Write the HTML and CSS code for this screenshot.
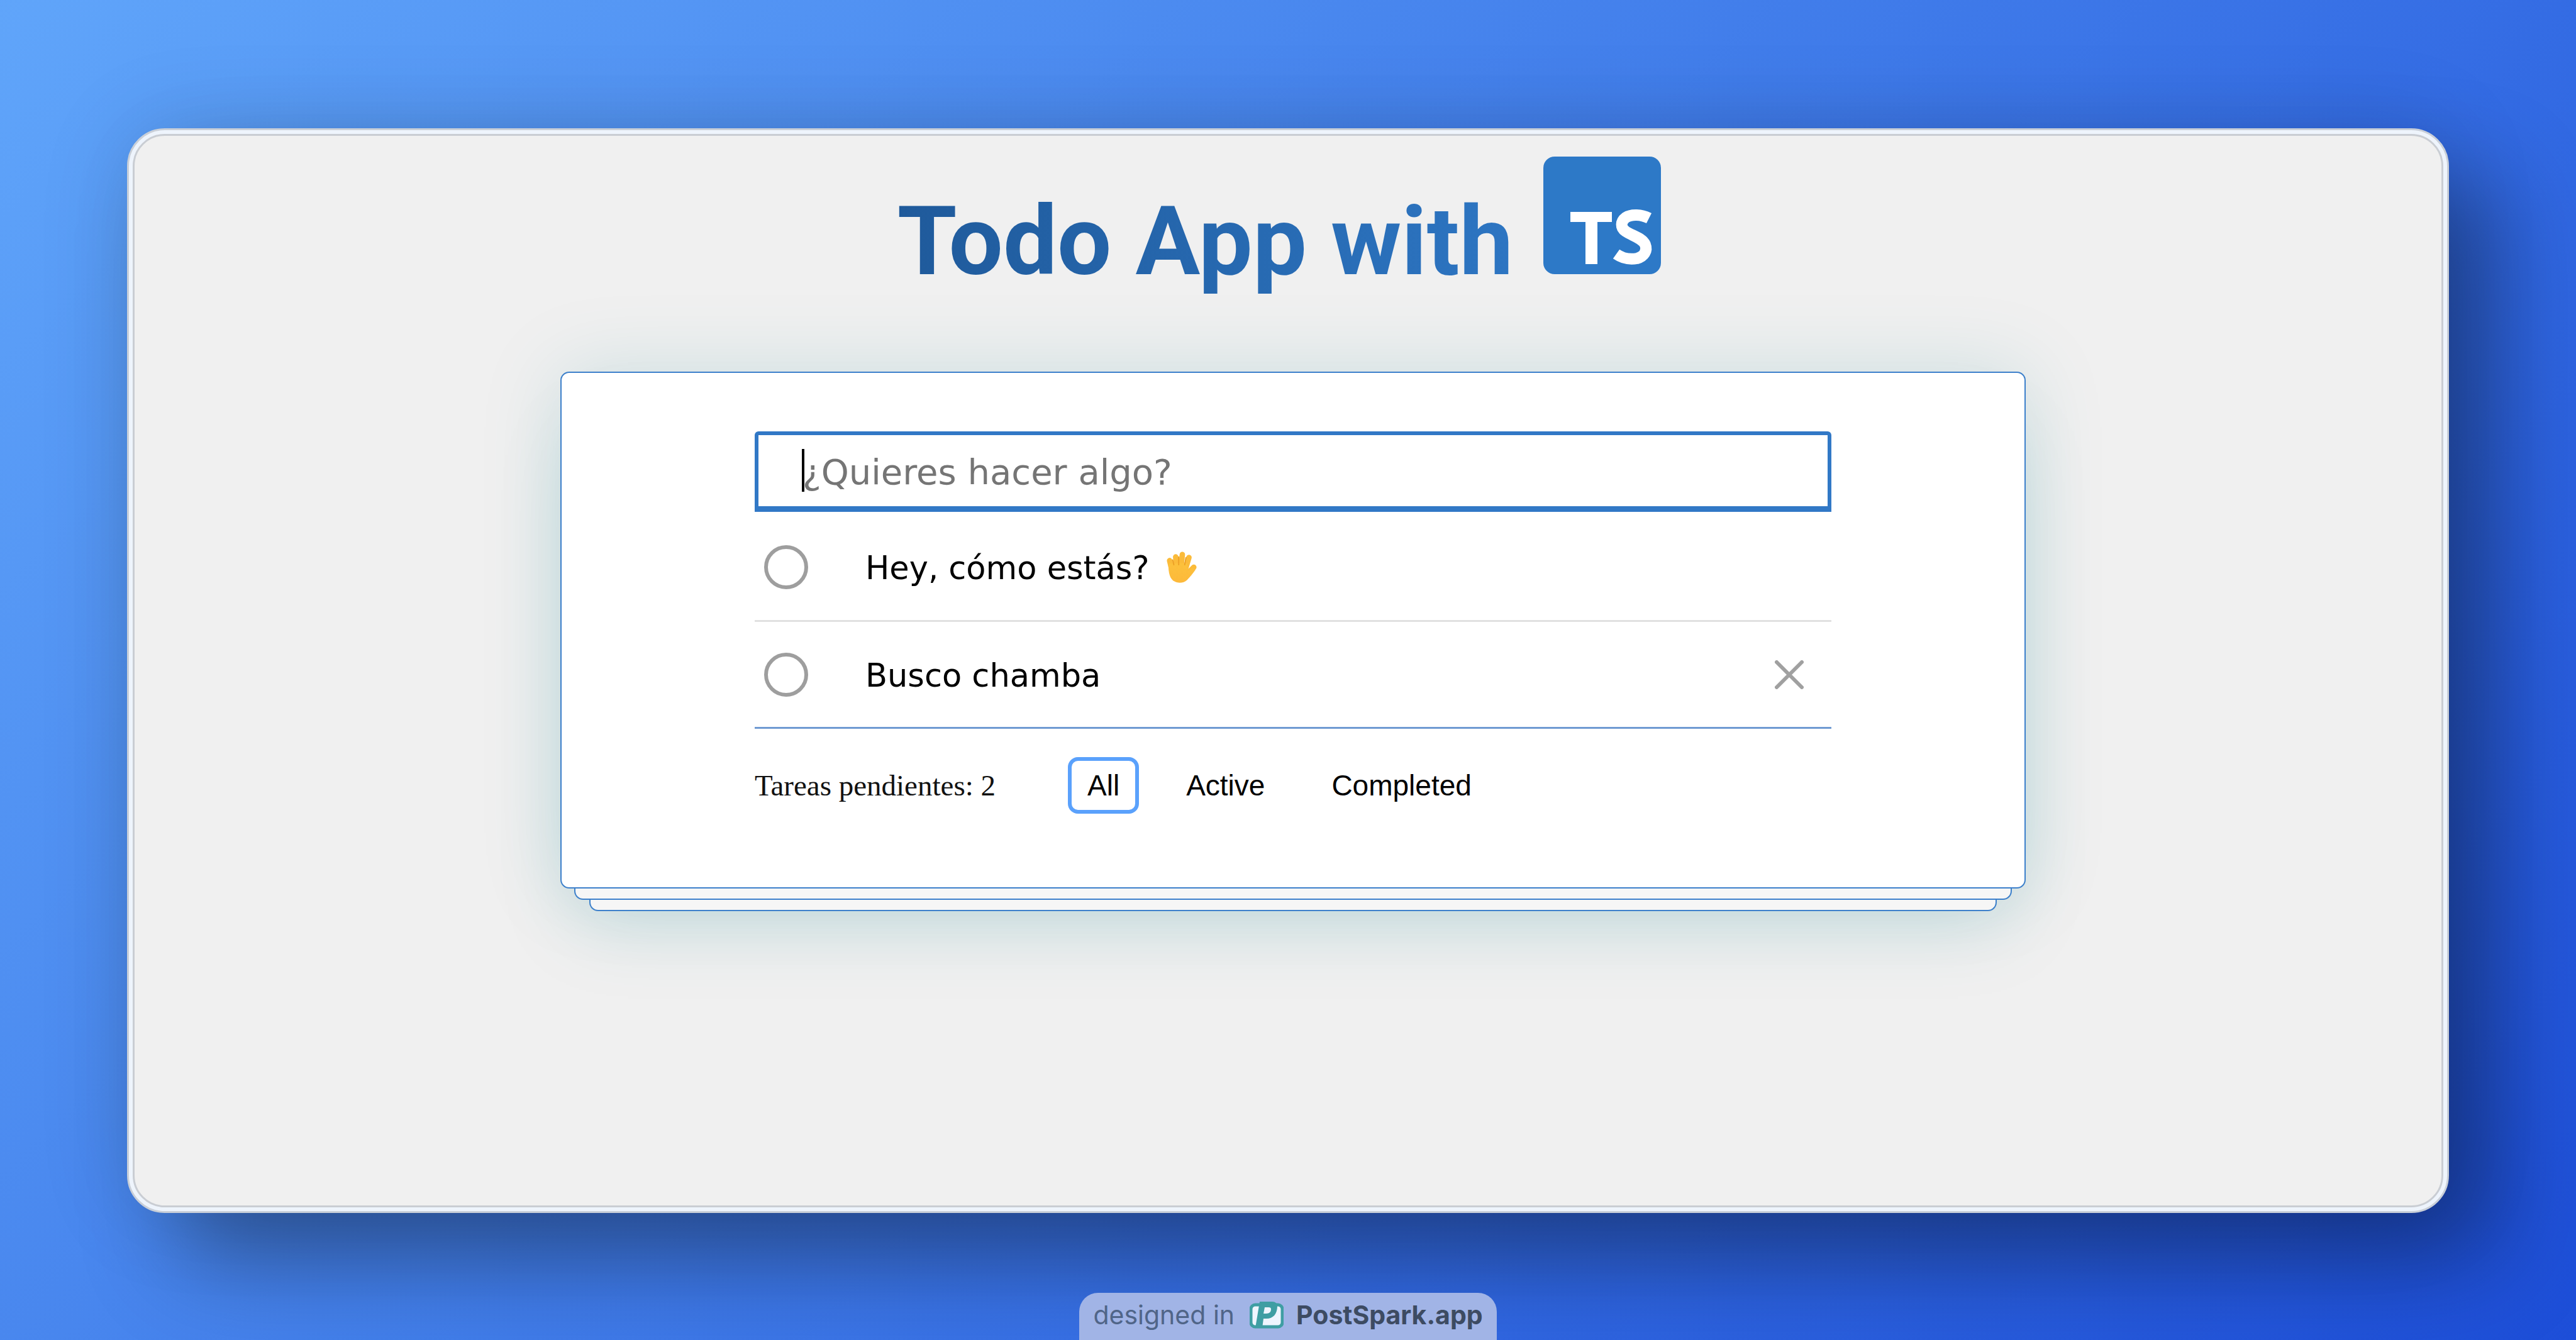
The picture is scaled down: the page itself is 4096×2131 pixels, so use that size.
FILE: index.html
```html
<!DOCTYPE html>
<html lang="es">
<head>
  <meta charset="utf-8">
  <meta name="viewport" content="width=device-width, initial-scale=1">
  <title>Todo App with TypeScript</title>
  <link rel="stylesheet" href="styles.css">
</head>
<body>
  <div class="stage">
    <div class="frame">
      <main class="screen">
        <h1 class="title">
          <span class="title-text">Todo App with</span>
          <svg class="ts-logo" viewBox="0 0 187 187" role="img" aria-label="TypeScript">
            <rect width="187" height="187" rx="18" fill="#2d79c7"/>
            <path fill="#fff" d="M43 88h66v16H86v67H67v-67H43z"/>
            <path fill="none" stroke="#fff" stroke-width="18" d="M168 98c-12-6-28-7-37-1-8 6-9 16 0 22 10 7 26 10 31 21 4 10-2 19-13 22-11 2-23 0-33-7"/>
          </svg>
        </h1>
        <section class="todo">
          <div class="card">
            <form class="new-todo">
              <input class="new-todo-input" type="text" aria-label="Nueva tarea" placeholder="¿Quieres hacer algo?">
              <span class="caret"></span>
            </form>
            <ul class="list">
              <li class="item">
                <input class="toggle" type="checkbox" id="todo-1">
                <label class="item-text" for="todo-1">Hey, cómo estás?</label>
                <svg class="hand" viewBox="0 0 52 54" role="img" aria-label="Mano saludando">
                  <defs>
                    <linearGradient id="skin" x1="0" y1="0" x2="0" y2="1">
                      <stop offset="0" stop-color="#fcc13c"/>
                      <stop offset="1" stop-color="#fdb93a"/>
                    </linearGradient>
                  </defs>
                  <g stroke-linecap="round" fill="none" stroke="#fbbb3a" stroke-width="9">
                    <path d="M6 16l4 17"/><path d="M16 10l2 20"/><path d="M27 6l-2 22"/><path d="M38 11l-6 20"/><path d="M46 27l-10 10"/>
                  </g>
                  <path fill="url(#skin)" d="M4 22c3-2 8 0 12-1 5-1 12-1 19 0l1 12 8-5 5 3c-5 7-9 12-14 17-5 5-14 6-20 3C6 47 4 36 4 22z"/>
                  <g stroke-linecap="round" fill="none" stroke="#eda126" stroke-width="2">
                    <path d="M11 15l2 8"/><path d="M21 10v13"/><path d="M33 11l-2 12"/>
                  </g>
                </svg>
              </li>
              <li class="item">
                <input class="toggle" type="checkbox" id="todo-2">
                <label class="item-text" for="todo-2">Busco chamba</label>
                <button class="destroy" type="button" aria-label="Borrar">
                  <svg class="destroy-icon" viewBox="0 0 46 46" aria-hidden="true">
                    <path d="M3 3l40 40M43 3L3 43" fill="none" stroke="#a0a0a0" stroke-width="6" stroke-linecap="round"/>
                  </svg>
                </button>
              </li>
            </ul>
            <footer class="footer">
              <span class="count">Tareas pendientes: 2</span>
              <div class="filters">
                <button class="filter selected" type="button">All</button>
                <button class="filter" type="button">Active</button>
                <button class="filter" type="button">Completed</button>
              </div>
            </footer>
          </div>
          <div class="sheet sheet-near"></div>
          <div class="sheet sheet-far"></div>
        </section>
      </main>
    </div>
    <a class="badge" href="#">
      <span class="badge-lead">designed in</span>
      <svg class="badge-logo" viewBox="0 0 54 44" aria-hidden="true">
        <rect x="2" y="6" width="50" height="35" rx="7" fill="#eff5ff" stroke="#3f9ea3" stroke-width="5"/>
        <path fill="#3f9ea3" fill-rule="evenodd" d="M16 1h20c5 0 8 3 8 7 0 13-7 20-17 20h-5l-2 15H9zM24 10l-2 10h4c6 0 8-3 8-7 0-2-1-3-4-3z"/>
      </svg>
      <strong class="badge-name">PostSpark.app</strong>
    </a>
  </div>
</body>
</html>
```

FILE: styles.css
```css
* {
  box-sizing: border-box;
}

body {
  margin: 0;
}

.stage {
  min-height: 100vh;
  display: flex;
  flex-direction: column;
  align-items: center;
  background: linear-gradient(135deg, #60a5fa, #1d4ed8);
}

.frame {
  flex: 1;
  align-self: stretch;
  display: flex;
  margin: 204px 202px 127px;
  padding: 6px;
  border: 3px solid #c9cfd8;
  border-radius: 60px;
  background: #eef4fc;
  box-shadow: 80px 80px 150px rgba(0, 0, 0, 0.34), 0 0 150px rgba(0, 0, 0, 0.12);
}

.screen {
  flex: 1;
  padding: 33px 0 0 16px;
  border: 3px solid #c9cdd3;
  border-radius: 51px;
  background: #f0f0f0;
}

.title {
  display: flex;
  justify-content: center;
  align-items: baseline;
  gap: 48px;
  margin: 0 44px 0 0;
  font: 700 153px/190px Roboto, sans-serif;
}

.title-text {
  background: linear-gradient(to right, #1f5a9b, #2d75c2);
  background-clip: text;
  color: transparent;
}

.ts-logo {
  width: 187px;
  height: 187px;
}

.todo {
  width: 2330px;
  max-width: 100%;
  margin: 112px auto 0;
}

.card {
  position: relative;
  padding: 93px 307px 117px;
  border: 2px solid #3d80cb;
  border-radius: 14px;
  background: #fff;
  box-shadow: 0 0 130px rgba(0, 128, 140, 0.15), 0 80px 120px -30px rgba(0, 128, 140, 0.18);
}

.sheet {
  position: relative;
  height: 18px;
  border: 2px solid #3d80cb;
  border-top: 0;
  border-radius: 0 0 14px 14px;
  background: #f6f6f6;
}

.sheet-near {
  margin: 0 22px;
}

.sheet-far {
  margin: 0 46px;
}

.new-todo {
  position: relative;
}

.new-todo-input {
  display: block;
  width: 100%;
  height: 128px;
  padding: 4px 70px 0;
  border: 6px solid #3178c6;
  border-bottom-width: 9px;
  border-radius: 6px 6px 0 0;
  background: #fff;
  font: 56px "DejaVu Sans", sans-serif;
  color: #111;
}

.new-todo-input::placeholder {
  color: #757575;
  opacity: 1;
}

.caret {
  position: absolute;
  left: 75px;
  top: 28px;
  width: 4px;
  height: 68px;
  background: #000;
}

.list {
  margin: 4px 0 0;
  padding: 0;
  list-style: none;
}

.item {
  display: flex;
  align-items: center;
  height: 168px;
  padding: 0 44px 0 15px;
}

.item + .item {
  height: 170px;
  border-top: 3px solid #e1e1e1;
}

.toggle {
  appearance: none;
  width: 70px;
  height: 70px;
  margin: 0 91px 0 0;
  border: 6px solid #9e9e9e;
  border-radius: 50%;
}

.item-text {
  padding-top: 4px;
  font: 51px/60px "DejaVu Sans", sans-serif;
  color: #000;
}

.hand {
  width: 50px;
  height: 52px;
  margin-left: 26px;
}

.destroy {
  display: flex;
  margin-left: auto;
  padding: 0;
  border: 0;
  background: none;
}

.destroy-icon {
  width: 46px;
  height: 46px;
}

.footer {
  display: flex;
  align-items: center;
  gap: 115px;
  padding-top: 45px;
  border-top: 3px solid #6f9ad2;
}

.count {
  font: 47px/52px "Liberation Serif", serif;
  color: #111;
}

.filters {
  display: flex;
  gap: 44px;
}

.filter {
  height: 90px;
  padding: 0 25px;
  border: 6px solid transparent;
  border-radius: 16px;
  background: none;
  font: 46px "Liberation Sans", sans-serif;
  color: #000;
}

.filter.selected {
  border-color: #5aa1fc;
}

.badge {
  display: flex;
  align-items: center;
  gap: 20px;
  height: 75px;
  padding: 0 22px 6px;
  border-radius: 30px 30px 0 0;
  background: #a1b4e6;
  font: 41px Inter, sans-serif;
  color: #506588;
  text-decoration: none;
}

.badge-logo {
  width: 54px;
  height: 44px;
  margin-left: 4px;
}

.badge-name {
  font-weight: 700;
  color: #3d4b62;
}
```
